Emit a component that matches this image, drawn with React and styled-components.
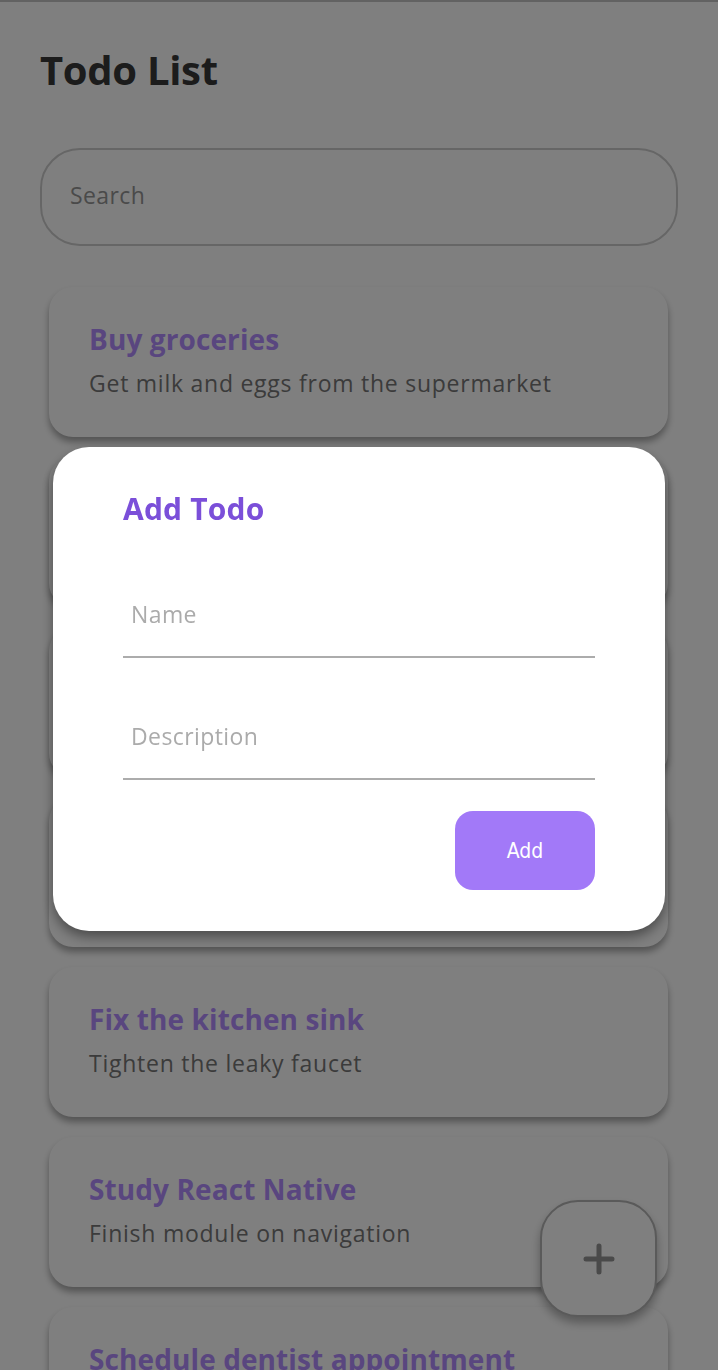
import styled, { createGlobalStyle } from "styled-components";

const todos = [
  { title: "Buy groceries", text: "Get milk and eggs from the supermarket" },
  { title: "Finish the report", text: "Complete the quarterly sales report" },
  { title: "Call mom", text: "Check in and say hello" },
  { title: "Clean the garage", text: "Sort the boxes and sweep the floor" },
  { title: "Fix the kitchen sink", text: "Tighten the leaky faucet" },
  { title: "Study React Native", text: "Finish module on navigation" },
  { title: "Schedule dentist appointment", text: "Book a checkup for next month" },
];

const GlobalStyle = createGlobalStyle`
  html, body {
    margin: 0;
    background: #ffffff;
    font-family: "Open Sans", "Noto Sans", sans-serif;
    overflow: hidden;
  }
  * { box-sizing: border-box; }
`;

const App = () => {
  return (
    <>
      <GlobalStyle />
      <Screen>
        <Title>Todo List</Title>
        <SearchBox placeholder="Search" />
        <List>
          {todos.map((todo) => (
            <Card key={todo.title}>
              <CardTitle>{todo.title}</CardTitle>
              <CardText>{todo.text}</CardText>
            </Card>
          ))}
        </List>
        <Fab>
          <svg width="34" height="34" viewBox="0 0 34 34">
            <path d="M17 4v26M4 17h26" stroke="#949494" strokeWidth="5" strokeLinecap="round" />
          </svg>
        </Fab>
      </Screen>

      <Overlay>
        <Modal>
          <ModalTitle>Add Todo</ModalTitle>
          <Field placeholder="Name" />
          <Field placeholder="Description" $gap={42} />
          <Actions>
            <AddButton>Add</AddButton>
          </Actions>
        </Modal>
      </Overlay>
    </>
  );
};

const Screen = styled.div`
  height: 1370px;
  overflow: hidden;
  padding: 0 40px;
  border-top: 2px solid #c4c4c4;
`;

const Title = styled.h1`
  margin: 0;
  padding-top: 43px;
  font-size: 40px;
  line-height: 50px;
  font-weight: 700;
  color: #383838;
  letter-spacing: -0.3px;
`;

const SearchBox = styled.input`
  display: block;
  width: 100%;
  height: 98px;
  margin-top: 53px;
  padding: 0 28px 4px;
  border: 2px solid #cdcdcd;
  border-radius: 40px;
  background: transparent;
  font-family: inherit;
  font-size: 23px;
  letter-spacing: 0.4px;
  outline: none;

  &::placeholder {
    color: #959595;
  }
`;

const List = styled.div`
  display: flex;
  flex-direction: column;
  gap: 20px;
  margin-top: 41px;
  padding: 0 10px 0 9px;
`;

const Card = styled.div`
  flex-shrink: 0;
  height: 150px;
  padding: 33px 40px 0;
  border-radius: 24px;
  background: #ffffff;
  box-shadow: 0 5px 7px rgba(0, 0, 0, 0.35);
`;

const CardTitle = styled.div`
  font-size: 28px;
  line-height: 38px;
  font-weight: 700;
  color: #b38dff;
  letter-spacing: 0.1px;
`;

const CardText = styled.div`
  margin-top: 9px;
  font-size: 23px;
  line-height: 32px;
  color: #767676;
  letter-spacing: 0.75px;
`;

const Fab = styled.div`
  position: fixed;
  right: 61px;
  bottom: 53px;
  width: 117px;
  height: 117px;
  display: flex;
  align-items: center;
  justify-content: center;
  border: 2px solid #b4b4b4;
  border-radius: 38px;
  background: #ffffff;
  box-shadow: 0 6px 10px rgba(0, 0, 0, 0.3);
`;

const Overlay = styled.div`
  position: fixed;
  inset: 0;
  display: flex;
  align-items: center;
  justify-content: center;
  background: rgba(0, 0, 0, 0.5);
`;

const Modal = styled.div`
  width: 612px;
  height: 484px;
  margin-top: 8px;
  padding: 42px 70px 41px;
  border-radius: 36px;
  background: #ffffff;
  box-shadow: 0 6px 12px rgba(0, 0, 0, 0.4);
`;

const ModalTitle = styled.div`
  font-size: 30px;
  line-height: 40px;
  font-weight: 700;
  color: #7b4fd9;
  letter-spacing: 0.2px;
`;

const Field = styled.input`
  display: block;
  width: 100%;
  height: 80px;
  margin-top: ${(p) => p.$gap || 49}px;
  padding: 0 8px 6px;
  border: none;
  border-bottom: 2px solid #acacac;
  background: transparent;
  font-family: inherit;
  font-size: 23px;
  letter-spacing: 0.4px;
  outline: none;

  &::placeholder {
    color: #ababab;
  }
`;

const Actions = styled.div`
  display: flex;
  justify-content: flex-end;
  margin-top: 31px;
`;

const AddButton = styled.button`
  width: 140px;
  height: 79px;
  border: none;
  border-radius: 18px;
  background: #a279f8;
  color: #ffffff;
  font-family: "DejaVu Sans Condensed", "Liberation Sans Narrow", sans-serif;
  font-size: 21px;
`;

export default App;
